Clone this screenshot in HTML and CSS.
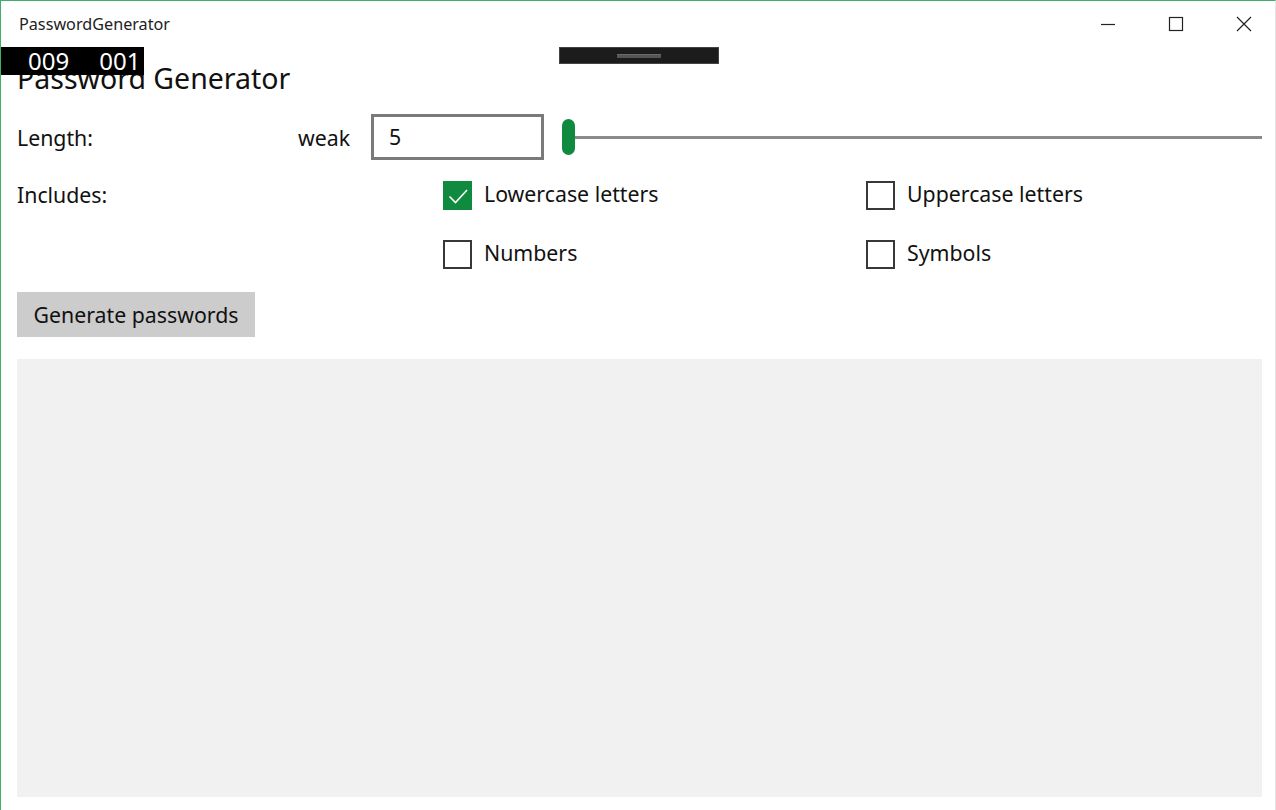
FILE: index.html
```html
<!DOCTYPE html>
<html>
<head>
<meta charset="utf-8">
<link rel="stylesheet" href="styles.css">
</head>
<body>
<div class="window">
  <div class="titlebar">
    <div class="title">PasswordGenerator</div>
    <div class="controls">
      <div class="ctl"><svg width="16" height="16" viewBox="0 0 16 16"><path d="M1 8.5H15" stroke="#222" stroke-width="1.2"/></svg></div>
      <div class="ctl"><svg width="16" height="16" viewBox="0 0 16 16"><rect x="1.5" y="1.5" width="13" height="13" fill="none" stroke="#222" stroke-width="1.2"/></svg></div>
      <div class="ctl"><svg width="16" height="16" viewBox="0 0 16 16"><path d="M1 1L15 15M15 1L1 15" stroke="#222" stroke-width="1.2"/></svg></div>
    </div>
  </div>
  <div class="counter"><span>009</span><span>001</span></div>
  <div class="dragbar"><div class="grip"></div></div>
  <main class="content">
    <h1 class="heading">Password Generator</h1>
    <div class="row length-row">
      <div class="label">Length:</div>
      <div class="strength">weak</div>
      <div class="textbox">5</div>
      <div class="slider">
        <div class="thumb"></div>
        <div class="track"></div>
      </div>
    </div>
    <div class="row includes-row">
      <div class="label">Includes:</div>
      <div class="checks">
        <label class="check"><span class="box checked"><svg width="22" height="22" viewBox="0 0 22 22"><path d="M2.5 11.5L8.5 17.5L20 5" fill="none" stroke="#fff" stroke-width="1.6"/></svg></span>Lowercase letters</label>
        <label class="check"><span class="box"></span>Uppercase letters</label>
        <label class="check"><span class="box"></span>Numbers</label>
        <label class="check"><span class="box"></span>Symbols</label>
      </div>
    </div>
    <button class="generate">Generate passwords</button>
    <div class="output"></div>
  </main>
</div>
</body>
</html>
```

FILE: styles.css
```css
* { box-sizing: border-box; }
html, body { margin: 0; padding: 0; background: #fff; }
body {
  width: 1276px;
  height: 810px;
  overflow: hidden;
  font-family: "Noto Sans", "Open Sans", sans-serif;
  color: #111;
}
.window {
  position: relative;
  width: 1276px;
  height: 810px;
  border-top: 1px solid #3fae69;
  border-left: 1px solid #3fae69;
  border-right: 1px solid #e6e6e6;
  background: #fff;
  display: flex;
  flex-direction: column;
}
.titlebar {
  height: 46px;
  display: flex;
  align-items: flex-start;
  justify-content: space-between;
}
.title {
  font-family: "Noto Sans", "Open Sans", sans-serif;
  font-size: 16.2px;
  color: #222;
  padding: 12px 0 0 18px;
}
.controls { display: flex; padding-top: 15px; margin-right: -3px; }
.ctl { width: 68px; display: flex; justify-content: center; }
.counter {
  position: absolute;
  left: 0;
  top: 46px;
  width: 143px;
  height: 28px;
  background: #000;
  color: #fff;
  font-size: 24px;
  line-height: 28px;
  display: flex;
  gap: 30px;
  padding-left: 27px;
  z-index: 2;
}
.dragbar {
  position: absolute;
  left: 558px;
  top: 46px;
  width: 160px;
  height: 17px;
  background: #1c1c1c;
  border: 1px solid #444;
  display: flex;
  align-items: center;
  justify-content: center;
  z-index: 2;
}
.grip { width: 44px; height: 4px; background: #555; border-top: 1px solid #6a6a6a; }
.content {
  padding: 0 13px 0 16px;
  display: flex;
  flex-direction: column;
}
.heading {
  margin: 13px 0 0 0;
  font-size: 28.5px;
  font-weight: 400;
  line-height: 36px;
  height: 36px;
}
.row { display: flex; align-items: center; }
.label { font-size: 21.3px; width: 281px; }
.length-row { margin-top: 18px; height: 46px; }
.strength { font-size: 21.3px; width: 73px; }
.textbox {
  width: 173px;
  height: 46px;
  border: 3px solid #7a7a7a;
  font-size: 21.3px;
  line-height: 40px;
  padding-left: 15px;
}
.slider {
  flex: 1;
  display: flex;
  align-items: center;
  padding-left: 18px;
}
.thumb {
  width: 13px;
  height: 36px;
  border-radius: 7px;
  background: #108a3e;
}
.track { flex: 1; height: 3px; background: #8a8a8a; }
.includes-row { align-items: flex-start; margin-top: 19px; }
.includes-row .label { padding-top: 2px; height: 28px; line-height: 28px; }
.checks {
  margin-left: 145px;
  display: grid;
  grid-template-columns: 423px 300px;
  row-gap: 30px;
}
.check {
  display: flex;
  align-items: center;
  gap: 12px;
  font-size: 21.3px;
  line-height: 22px;
  height: 29px;
}
.box {
  width: 29px;
  height: 29px;
  border: 2px solid #383838;
  display: flex;
  align-items: center;
  justify-content: center;
  margin-top: 4px;
}
.box.checked { background: #108a3e; border-color: #108a3e; }
.generate {
  align-self: flex-start;
  margin-top: 25px;
  width: 238px;
  height: 45px;
  border: none;
  background: #cccccc;
  font-family: "Noto Sans", "Open Sans", sans-serif;
  font-size: 21.3px;
  color: #111;
  padding: 0;
}
.output {
  margin-top: 22px;
  height: 438px;
  background: #f1f1f1;
}
```
